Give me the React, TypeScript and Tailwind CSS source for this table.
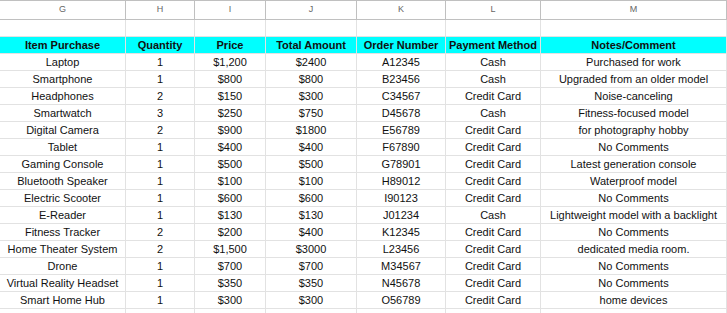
const columns = [
  { letter: "G", width: "w-[126px]" },
  { letter: "H", width: "w-[69px]" },
  { letter: "I", width: "w-[71px]" },
  { letter: "J", width: "w-[91px]" },
  { letter: "K", width: "w-[89px]" },
  { letter: "L", width: "w-[95px]" },
  { letter: "M", width: "w-[186px]" },
];

const headers = [
  "Item Purchase",
  "Quantity",
  "Price",
  "Total Amount",
  "Order Number",
  "Payment Method",
  "Notes/Comment",
];

const rows = [
  ["Laptop", "1", "$1,200", "$2400", "A12345", "Cash", "Purchased for work"],
  ["Smartphone", "1", "$800", "$800", "B23456", "Cash", "Upgraded from an older model"],
  ["Headphones", "2", "$150", "$300", "C34567", "Credit Card", "Noise-canceling"],
  ["Smartwatch", "3", "$250", "$750", "D45678", "Cash", "Fitness-focused model"],
  ["Digital Camera", "2", "$900", "$1800", "E56789", "Credit Card", "for photography hobby"],
  ["Tablet", "1", "$400", "$400", "F67890", "Credit Card", "No Comments"],
  ["Gaming Console", "1", "$500", "$500", "G78901", "Credit Card", "Latest generation console"],
  ["Bluetooth Speaker", "1", "$100", "$100", "H89012", "Credit Card", "Waterproof model"],
  ["Electric Scooter", "1", "$600", "$600", "I90123", "Credit Card", "No Comments"],
  ["E-Reader", "1", "$130", "$130", "J01234", "Cash", "Lightweight model with a backlight"],
  ["Fitness Tracker", "2", "$200", "$400", "K12345", "Credit Card", "No Comments"],
  ["Home Theater System", "2", "$1,500", "$3000", "L23456", "Credit Card", "dedicated media room."],
  ["Drone", "1", "$700", "$700", "M34567", "Credit Card", "No Comments"],
  ["Virtual Reality Headset", "1", "$350", "$350", "N45678", "Credit Card", "No Comments"],
  ["Smart Home Hub", "1", "$300", "$300", "O56789", "Credit Card", "home devices"],
];

const cellBase =
  "shrink-0 h-[17px] flex items-center justify-center border-r border-b border-[#e2e2e2] whitespace-nowrap overflow-hidden";

function Row({ cells, header }: { cells: string[]; header?: boolean }) {
  return (
    <div className="flex">
      {columns.map((c, i) => (
        <div
          key={c.letter}
          className={`${cellBase} ${c.width} ${header ? "bg-[#00ffff] font-bold" : ""}`}
        >
          {cells[i]}
        </div>
      ))}
    </div>
  );
}

export default function App() {
  return (
    <div
      className="w-[727px] h-[313px] overflow-hidden bg-white text-[11px] text-[#111]"
      style={{ fontFamily: '"Liberation Sans", Arial, sans-serif' }}
    >
      <div className="flex border-t border-b border-[#c0c0c0]">
        {columns.map((c) => (
          <div
            key={c.letter}
            className={`shrink-0 h-[18px] ${c.width} flex items-center justify-center border-r border-[#c0c0c0] text-[9px] text-[#666]`}
          >
            {c.letter}
          </div>
        ))}
      </div>
      <Row cells={["", "", "", "", "", "", ""]} />
      <Row cells={headers} header />
      {rows.map((r) => (
        <Row key={r[4]} cells={r} />
      ))}
      <Row cells={["", "", "", "", "", "", ""]} />
    </div>
  );
}
